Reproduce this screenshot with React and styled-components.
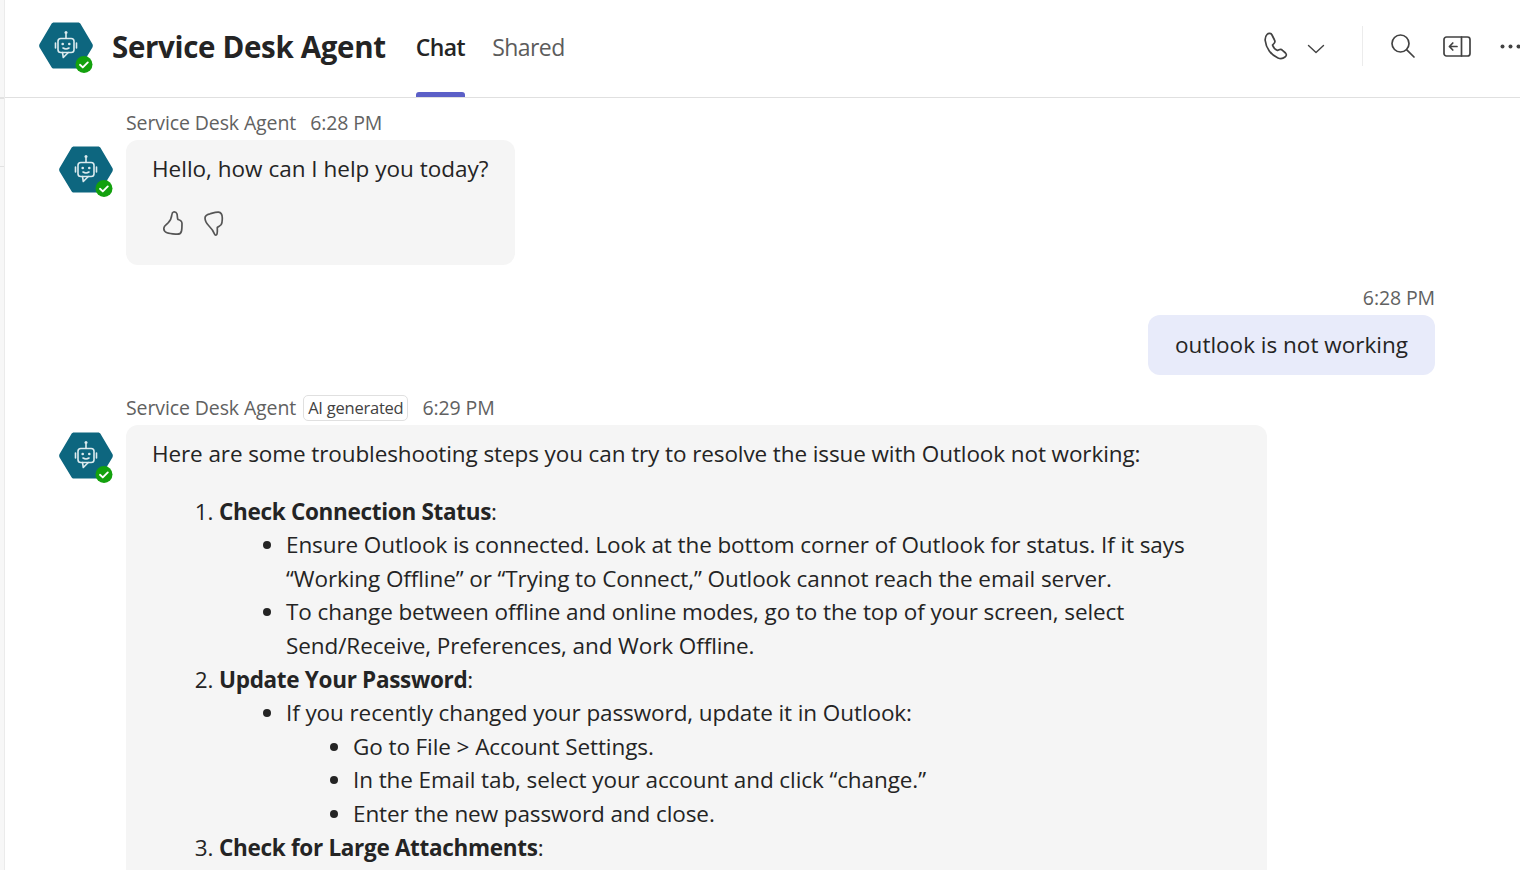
import React from 'react'
import styled, { createGlobalStyle } from 'styled-components'

const GlobalStyle = createGlobalStyle`
  html, body {
    margin: 0;
    padding: 0;
    background: #fff;
    overflow: hidden;
  }
  * { box-sizing: border-box; }
`

const HexAvatar = ({ size = 54 }) => (
  <AvatarBox $size={size}>
    <svg width={size} height={size} viewBox="0 0 54 54" fill="none">
      <path d="M15 1.5h24c1.200 0 2 .5 2.600 1.500L53.400 23c.6 1.200.6 2.200 0 3.400L41.600 46c-.6 1-1.400 1.500-2.600 1.500H15c-1.200 0-2-.5-2.600-1.500L.6 26.400c-.6-1.200-.6-2.200 0-3.400L12.400 3c.6-1 1.400-1.500 2.600-1.500z" fill="#0d667f" />
      <g stroke="#dcebef" strokeWidth="1.600" strokeLinecap="round" strokeLinejoin="round">
        <path d="M27 13v4" />
        <rect x="19" y="17.500" width="16" height="14" rx="2.800" />
        <path d="M23.500 31.500l.8 5 5-5" />
        <path d="M16.500 22v5M37.500 22v5" />
        <path d="M24 27c1.600 1 4.400 1 6 0" />
      </g>
      <circle cx="27" cy="11.500" r="1.500" fill="#dcebef" />
      <circle cx="23.700" cy="23" r="1.300" fill="#dcebef" />
      <circle cx="30.300" cy="23" r="1.300" fill="#dcebef" />
      <circle cx="45" cy="43.500" r="8.500" fill="#13a10e" />
      <path d="M41 43.800l2.800 2.600 5-5" stroke="#fff" strokeWidth="1.900" strokeLinecap="round" strokeLinejoin="round" />
    </svg>
  </AvatarBox>
)

const PhoneIcon = () => (
  <svg width="24" height="28" viewBox="0 0 24 28" fill="none" stroke="#424242" strokeWidth="1.700" strokeLinejoin="round">
    <path d="M3 2.500C4.500 1 7 1 8 3l2.500 5c.8 1.500.5 2.500-.5 3.500L8.500 13c.8 2.500 2.500 4.500 5 5.500l1.500-.7c1.300-.6 2.500-.5 3.500.5l3 2.700c1.300 1.300 1 3-.5 4-2 1.700-4.500 2-7 1C7 23.200 2 16 1.200 8.500 1 6 1.500 4 3 2.500z" />
  </svg>
)

const ChevronIcon = () => (
  <svg width="18" height="10" viewBox="0 0 18 10" fill="none" stroke="#424242" strokeWidth="1.400" strokeLinecap="round" strokeLinejoin="round">
    <path d="M1.500 1.500 9 8.500l7.500-7" />
  </svg>
)

const SearchIcon = () => (
  <svg width="26" height="26" viewBox="0 0 26 26" fill="none" stroke="#424242" strokeWidth="1.700" strokeLinecap="round">
    <circle cx="10.500" cy="10.500" r="8.500" />
    <path d="M16.800 16.800 24 24" />
  </svg>
)

const PanelIcon = () => (
  <svg width="28" height="21" viewBox="0 0 28 21" fill="none" stroke="#424242" strokeWidth="1.700" strokeLinecap="round" strokeLinejoin="round">
    <rect x="1" y="1" width="26" height="19" rx="2.500" />
    <path d="M18.500 1v19" />
    <path d="M14 10.500H6.500M9.800 7l-3.400 3.500L9.800 14" />
  </svg>
)

const MoreIcon = () => (
  <svg width="21" height="5" viewBox="0 0 21 5" fill="#424242">
    <circle cx="2.500" cy="2.500" r="2" />
    <circle cx="10.500" cy="2.500" r="2" />
    <circle cx="18.500" cy="2.500" r="2" />
  </svg>
)

const ThumbUpIcon = () => (
  <svg width="20" height="24" viewBox="0 0 20 24" fill="none" stroke="#555" strokeWidth="1.700" strokeLinejoin="round">
    <path d="M10.500 1C12 .8 13.500 1.500 14 3c.6 2 0 4 1 5.500 2 .5 4 1.500 4 4 0 2.500 0 5.500-.5 7.500-.5 2.500-2 3.300-4.500 3.200-3-.2-7-.2-10-1.400-2-.8-3.200-2.300-3.200-4.300C.8 15 3 14 5 12c2-2 3.500-4.500 3.800-8 .2-1.500.7-2.800 1.700-3z" />
  </svg>
)

const ThumbDownIcon = () => (
  <svg width="20" height="25" viewBox="0 0 20 25" fill="none" stroke="#555" strokeWidth="1.700" strokeLinejoin="round">
    <path d="M1 7c0-2.500 2-3.500 5-4.200C9 2 12 1 14.500 1.200 17 1.500 18.300 4 18.300 7c0 3-.3 5.500-1.300 6.800-1 1.200-2.500 1.700-3.700 2.700-.1 2 .4 4.500-.3 6.500-.5 1.500-2 1.500-2.500 0-1-3-3-5.500-5.500-8C3 13 1 10 1 7z" />
  </svg>
)

const App = () => {
  return (
    <Page>
      <GlobalStyle />
      <Rail>
        <RailTick $top={97} />
        <RailTick $top={67} />
      </Rail>
      <Main>
        <Header>
          <HeaderAvatar>
            <HexAvatar />
          </HeaderAvatar>
          <Title>Service Desk Agent</Title>
          <Tabs>
            <Tab $active>Chat</Tab>
            <Tab>Shared</Tab>
          </Tabs>
          <Actions>
            <PhoneGroup>
              <PhoneIcon />
              <ChevronIcon />
            </PhoneGroup>
            <Divider />
            <SearchIcon />
            <PanelIcon />
            <MoreSlot>
              <MoreIcon />
            </MoreSlot>
          </Actions>
        </Header>

        <Thread>
          <BotRow>
            <RowAvatar $top={35}>
              <HexAvatar />
            </RowAvatar>
            <MessageColumn>
              <Meta>
                <span>Service Desk Agent</span>
                <Time>6:28 PM</Time>
              </Meta>
              <GreetingBubble>
                <Line>Hello, how can I help you today?</Line>
                <Feedback>
                  <ThumbUpIcon />
                  <ThumbDownIcon />
                </Feedback>
              </GreetingBubble>
            </MessageColumn>
          </BotRow>

          <UserRow>
            <Meta>6:28 PM</Meta>
            <UserBubble>outlook is not working</UserBubble>
          </UserRow>

          <BotRow $second>
            <RowAvatar $top={36}>
              <HexAvatar />
            </RowAvatar>
            <MessageColumn>
              <Meta>
                <span>Service Desk Agent</span>
                <AiTag>AI generated</AiTag>
                <Time>6:29 PM</Time>
              </Meta>
              <AnswerBubble>
                <AnswerLine>Here are some troubleshooting steps you can try to resolve the issue with Outlook not working:</AnswerLine>
                <Steps>
                  <li>
                    <strong>Check Connection Status</strong>:
                    <Bullets>
                      <li>Ensure Outlook is connected. Look at the bottom corner of Outlook for status. If it says “Working Offline” or “Trying to Connect,” Outlook cannot reach the email server.</li>
                      <li>To change between offline and online modes, go to the top of your screen, select Send/Receive, Preferences, and Work Offline.</li>
                    </Bullets>
                  </li>
                  <li>
                    <strong>Update Your Password</strong>:
                    <Bullets>
                      <li>
                        If you recently changed your password, update it in Outlook:
                        <Bullets>
                          <li>Go to File &gt; Account Settings.</li>
                          <li>In the Email tab, select your account and click “change.”</li>
                          <li>Enter the new password and close.</li>
                        </Bullets>
                      </li>
                    </Bullets>
                  </li>
                  <li>
                    <strong>Check for Large Attachments</strong>:
                  </li>
                </Steps>
              </AnswerBubble>
            </MessageColumn>
          </BotRow>
        </Thread>
      </Main>
    </Page>
  )
}

export default App

const Page = styled.div`
  width: 1520px;
  height: 870px;
  display: flex;
  overflow: hidden;
  background: #fff;
  color: #242424;
  font-family: 'Open Sans', 'Noto Sans', sans-serif;
`

const Rail = styled.div`
  width: 5px;
  flex: none;
  background: #f7f7f7;
  border-right: 1px solid #ebebeb;
`

const RailTick = styled.div`
  height: 1.500px;
  margin-top: ${(p) => p.$top}px;
  background: #e2e2e2;
`

const Main = styled.div`
  flex: 1;
  min-width: 0;
  display: flex;
  flex-direction: column;
`

const Header = styled.header`
  height: 98px;
  flex: none;
  display: flex;
  align-items: flex-start;
  border-bottom: 1.500px solid #e0e0e0;
`

const HeaderAvatar = styled.div`
  margin: 21px 0 0 34px;
`

const AvatarBox = styled.div`
  width: ${(p) => p.$size}px;
  height: ${(p) => p.$size}px;
  flex: none;
  svg { display: block; }
`

const Title = styled.h1`
  margin: 27px 0 0 19px;
  font-size: 29.500px;
  line-height: 40px;
  font-weight: 700;
  color: #242424;
  letter-spacing: -0.33px;
  white-space: nowrap;
`

const Tabs = styled.nav`
  display: flex;
  gap: 27px;
  margin-left: 30px;
  height: 97px;
`

const Tab = styled.div`
  position: relative;
  padding-top: 31px;
  font-size: 23px;
  line-height: 32px;
  letter-spacing: -0.55px;
  font-weight: ${(p) => (p.$active ? 600 : 400)};
  color: ${(p) => (p.$active ? '#242424' : '#5c5c5c')};

  &::after {
    content: '';
    display: ${(p) => (p.$active ? 'block' : 'none')};
    position: absolute;
    left: 0;
    right: 0;
    bottom: 0;
    height: 5px;
    border-radius: 3px 3px 0 0;
    background: #5b5fc7;
  }
`

const Actions = styled.div`
  margin-left: auto;
  display: flex;
  align-items: center;
  height: 92px;
  gap: 27px;
  margin-right: -1px;
`

const PhoneGroup = styled.div`
  display: flex;
  align-items: center;
  gap: 19px;
  margin-right: 10px;

  svg:last-child { margin-top: 5px; }
`

const MoreSlot = styled.div`
  display: flex;
  margin-left: 2px;
`

const Divider = styled.div`
  width: 1px;
  height: 40px;
  background: #ececec;
`

const Thread = styled.div`
  flex: 1;
  min-height: 0;
  display: flex;
  flex-direction: column;
  padding: 12px 85px 0 54px;
`

const BotRow = styled.div`
  display: flex;
  gap: 13px;
  margin-top: ${(p) => (p.$second ? '20px' : '0')};
`

const RowAvatar = styled.div`
  padding-top: ${(p) => p.$top}px;
`

const MessageColumn = styled.div`
  min-width: 0;
  display: flex;
  flex-direction: column;
  align-items: flex-start;
`

const Meta = styled.div`
  display: flex;
  align-items: center;
  height: 30px;
  padding-bottom: 5px;
  font-size: 19.500px;
  letter-spacing: -0.11px;
  color: #616161;
  white-space: nowrap;
`

const Time = styled.span`
  margin-left: 14px;
`

const AiTag = styled.span`
  margin-left: 7px;
  padding: 0 4px;
  height: 26px;
  line-height: 23px;
  font-size: 16.500px;
  letter-spacing: -0.23px;
  border: 1px solid #e0e0e0;
  border-radius: 5px;
  color: #424242;
`

const Line = styled.div`
  font-size: 22.500px;
  line-height: 33.600px;
  letter-spacing: 0;
`

const AnswerLine = styled(Line)`
  letter-spacing: -0.1px;
`

const GreetingBubble = styled.div`
  width: 389px;
  height: 125px;
  padding: 12px 26px 0;
  border-radius: 12px;
  background: #f5f5f5;
`

const Feedback = styled.div`
  display: flex;
  gap: 21px;
  margin-top: 25px;
  padding-left: 11px;
`

const UserRow = styled.div`
  display: flex;
  flex-direction: column;
  align-items: flex-end;
  margin-top: 20px;
`

const UserBubble = styled.div`
  width: 287px;
  height: 60px;
  display: flex;
  align-items: center;
  justify-content: center;
  padding-bottom: 2px;
  border-radius: 12px;
  background: #e8ebfa;
  font-size: 22.500px;
`

const AnswerBubble = styled.div`
  width: 1141px;
  height: 600px;
  padding: 12px 26px 0;
  border-radius: 12px;
  background: #f5f5f5;
`

const Steps = styled.ol`
  margin: 24px 0 0;
  padding: 0 0 0 67px;
  font-size: 22.500px;
  line-height: 33.600px;
  letter-spacing: -0.09px;

  strong {
    font-weight: 700;
    letter-spacing: -0.31px;
  }
`

const Bullets = styled.ul`
  margin: 0;
  padding: 0 0 0 67px;
  list-style: disc;

  & & { list-style: disc; }
`
